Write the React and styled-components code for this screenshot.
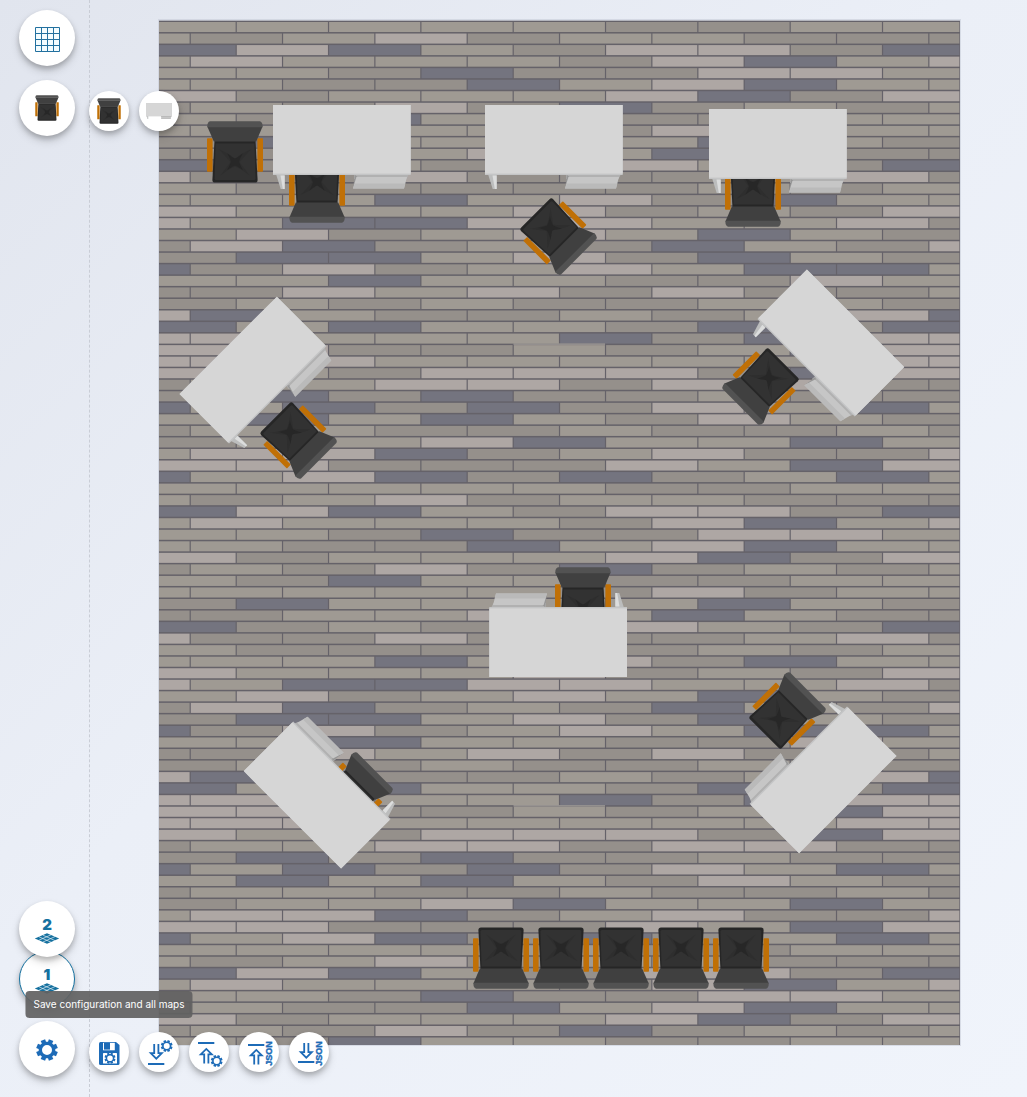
import React from "react";
import styled, { createGlobalStyle, css } from "styled-components";

const BLUE = "#1d6bb7";
const TEAL = "#14709f";

const GlobalStyle = createGlobalStyle`
  * { box-sizing: border-box; }
  body {
    margin: 0;
    font-family: Inter, "Liberation Sans", sans-serif;
    background: #eef2f9;
  }
`;

const Page = styled.div`
  display: grid;
  grid-template-columns: 90px 1fr;
  min-height: 100vh;
  background: linear-gradient(135deg, #e1e5ee 0%, #ebeff7 45%, #f0f4fb 100%);
`;

const Rail = styled.nav`
  position: relative;
  z-index: 2;
  display: flex;
  flex-direction: column;
  justify-content: space-between;
  padding: 10px 0 20px 19px;
  border-right: 1px dashed #c9cdd6;
`;

const RailGroup = styled.div`
  display: flex;
  flex-direction: column;
  gap: 14px;
`;

const ToolRow = styled.div`
  display: flex;
  align-items: flex-end;
  gap: 14px;
`;

const SmallTools = styled.div`
  display: flex;
  gap: 10px;
  padding-bottom: 5px;
`;

const Levels = styled.div`
  display: flex;
  flex-direction: column;
`;

const roundButton = css`
  position: relative;
  display: flex;
  flex: none;
  align-items: center;
  justify-content: center;
  padding: 0;
  border: 0;
  border-radius: 50%;
  background: #fff;
  cursor: pointer;
  box-shadow: 0 3px 5px rgba(0, 0, 0, 0.2), 0 5px 10px rgba(0, 0, 0, 0.14);
`;

const LargeButton = styled.button`
  ${roundButton}
  width: 56px;
  height: 56px;
`;

const SmallButton = styled.button`
  ${roundButton}
  width: 40px;
  height: 40px;
`;

const LevelButton = styled(LargeButton)`
  flex-direction: column;
  gap: 1px;
  padding-top: 2px;
  z-index: ${(p) => (p.$active ? 0 : 1)};
  border: ${(p) => (p.$active ? `1px solid ${TEAL}` : "0")};
  color: ${TEAL};
  font: 900 15px/15px Inter, "Liberation Sans", sans-serif;

  & + & {
    margin-top: -6px;
  }
`;

const Tooltip = styled.span`
  position: absolute;
  bottom: calc(100% + 14px);
  left: 50%;
  transform: translateX(-50%);
  padding: 0 8px;
  border-radius: 4px;
  background: rgba(97, 97, 97, 0.92);
  color: #fff;
  font: 400 10px/27px Inter, "Liberation Sans", sans-serif;
  white-space: nowrap;
`;

const Icon = styled.svg`
  display: block;
  flex: none;
  width: ${(p) => p.$w}px;
  height: ${(p) => p.$h}px;
  overflow: visible;
`;

const Workspace = styled.main`
  padding: 20px 67px 51px 69px;
`;

const FloorMap = styled.div`
  position: relative;
  width: 100%;
  aspect-ratio: 801 / 1025;
  outline: 1px solid rgba(200, 205, 216, 0.6);
`;

const FloorSvg = styled.svg`
  display: block;
  width: 100%;
  height: 100%;
`;

const Piece = styled.svg`
  position: absolute;
  overflow: visible;
  transform: translate(-50%, -50%) rotate(${(p) => p.$turn}deg);
`;

/* ---------- floor ---------- */

const MAP_W = 801;
const MAP_H = 1025;
const PLANK_W = 92.33;
const PLANK_H = 11.54;

const PLANKS = [
  "nnnnnggnn", "ngnlgnnggg", "dldngllgd", "nlnnngldnl", "nngdgglln",
  "nnggdnldnn", "lgnnnldgl", "gnglgdgngn", "ngdnnggnn", "nnnnnglgnn",
  "gdnnnndng", "ggnnlndngg", "dgngglngd", "lgglgggnlg", "ngggggngn",
  "nnndnlgdnn", "lnnnlgngl", "lnddllnnlg", "nlgnlndng", "gldgngdngl",
  "gddnlgdng", "dglgnlnddn", "nndnnggln", "gglnlglggn", "gngnggnng",
  "ldnggngnld", "dndnngdgd", "llnnndgdll", "llggngndl", "lllnnnnnll",
  "lnglllgdl", "gnnllgllgg", "gdgdggngg", "dndgdglndn", "ndndnglng",
  "gnnggnggng", "gnnldnndn", "nlldgnlggl", "llggglndl", "dnldgdgndn",
];

const PLANK_COLORS = { n: "#9f9a93", g: "#95908b", l: "#aea7a4", d: "#74747f" };

function Floor() {
  const planks = [];
  for (let row = 0; row * PLANK_H < MAP_H; row++) {
    const kinds = PLANKS[row % PLANKS.length];
    const firstJoint = row % 2 ? 31.2 : 77.2;
    for (let i = 0; i < kinds.length; i++) {
      const end = Math.min(firstJoint + i * PLANK_W, MAP_W);
      const start = i === 0 ? 0 : firstJoint + (i - 1) * PLANK_W;
      planks.push(
        <rect
          key={`${row}-${i}`}
          x={i === 0 ? 0 : start + 0.6}
          y={row * PLANK_H + 2}
          width={Math.max(0, end - start - (i === 0 ? 0.6 : 1.2))}
          height={PLANK_H - 1.5}
          fill={PLANK_COLORS[kinds[i]]}
        />
      );
    }
  }
  return (
    <FloorSvg viewBox={`0 0 ${MAP_W} ${MAP_H}`} preserveAspectRatio="none" aria-hidden="true">
      <defs>
        <clipPath id="floor-edge">
          <rect width={MAP_W} height={MAP_H} />
        </clipPath>
      </defs>
      <rect y="0.6" width={MAP_W} height={MAP_H - 0.6} fill="#656269" />
      <g clipPath="url(#floor-edge)">{planks}</g>
      <path d="M354.5 324.2H446M354.5 785.8H446" stroke="#a39f9a" strokeWidth="1.2" />
    </FloorSvg>
  );
}

/* ---------- furniture ---------- */

function ChairArt() {
  return (
    <>
      <rect x="0" y="17.3" width="5.6" height="33.5" rx="0.8" fill="#c07006" />
      <rect x="50.4" y="17.3" width="5.6" height="33.5" rx="0.8" fill="#c07006" />
      <path d="M7.5 19.5H48.5L50.6 59Q50.6 61.6 48 61.6H8Q5.4 61.6 5.4 59Z" fill="#262626" />
      <path d="M8.6 22.5H47.4L48.6 57.5Q48.6 59 47 59H9Q7.6 59 7.6 57.5Z" fill="#323232" />
      <path d="M11.5 28Q24 34 28 38Q32 34 44.5 28Q36 37 32.5 41Q37 47 42.5 54.5Q32 46.5 28 45.5Q24 46.5 13.5 54.5Q19 47 23.5 41Q20 37 11.5 28Z" fill="#2e2e2e" />
      <path d="M20 32Q26 37 28 37.5Q30 37 36 32Q32.5 38 32 41Q33.5 45 36 49Q30 45 28 44.8Q26 45 20 49Q22.5 45 24 41Q23.5 38 20 32Z" fill="#272727" />
      <path d="M0.3 5.5L6.8 20.6H49.2L55.6 5.5Z" fill="#404040" />
      <path d="M3 0.3H53Q55.8 1.2 55.6 6.2H0.3Q0 1.2 3 0.3Z" fill="#525252" />
    </>
  );
}

function DeskArt() {
  return (
    <>
      <path d="M2.7 68L7.7 84H11.7V68Z" fill="#bcbdbd" />
      <path d="M7.5 70.5H11.7V84H9.8Z" fill="#dcdddd" />
      <path d="M81.5 68H136.5L133.5 74H81Z" fill="#b1b1b1" />
      <path d="M82 70L80 83.6L84.5 72Z" fill="#969696" />
      <path d="M83.4 72H134L131 83.6H80Z" fill="#c6c6c6" />
      <path d="M81.8 78.5H132.3L131 83.6H80Z" fill="#bababa" />
      <rect width="137.7" height="70" fill="#c4c5c6" />
      <rect width="137.7" height="68.6" fill="#d6d6d6" />
    </>
  );
}

const KINDS = {
  chair: { w: 56, h: 62, Art: ChairArt },
  desk: { w: 138, h: 84, Art: DeskArt },
};

const PIECES = [
  { kind: "chair", x: 76, y: 132, turn: 0 },
  { kind: "chair", x: 158, y: 172, turn: 180 },
  { kind: "desk", x: 183, y: 127, turn: 0 },
  { kind: "desk", x: 395, y: 127, turn: 0 },
  { kind: "chair", x: 398, y: 215, turn: 135 },
  { kind: "chair", x: 594, y: 176, turn: 180 },
  { kind: "desk", x: 619, y: 131, turn: 0 },
  { kind: "desk", x: 99, y: 355, turn: -45 },
  { kind: "chair", x: 138, y: 419, turn: 135 },
  { kind: "desk", x: 667, y: 328, turn: 45 },
  { kind: "chair", x: 603, y: 365, turn: 225 },
  { kind: "chair", x: 424, y: 578, turn: 0 },
  { kind: "desk", x: 399, y: 615, turn: 180 },
  { kind: "desk", x: 659, y: 755, turn: 135 },
  { kind: "chair", x: 627, y: 692, turn: 45 },
  { kind: "chair", x: 194, y: 772, turn: 45 },
  { kind: "desk", x: 163, y: 770, turn: 225 },
  { kind: "chair", x: 342, y: 938, turn: 180 },
  { kind: "chair", x: 402, y: 938, turn: 180 },
  { kind: "chair", x: 462, y: 938, turn: 180 },
  { kind: "chair", x: 522, y: 938, turn: 180 },
  { kind: "chair", x: 582, y: 938, turn: 180 },
];

function Furniture({ kind, x, y, turn }) {
  const { w, h, Art } = KINDS[kind];
  return (
    <Piece
      viewBox={`0 0 ${w} ${h}`}
      $turn={turn}
      style={{
        left: `${(x / MAP_W) * 100}%`,
        top: `${(y / MAP_H) * 100}%`,
        width: `${(w / MAP_W) * 100}%`,
      }}
      aria-hidden="true"
    >
      <Art />
    </Piece>
  );
}

/* ---------- icons ---------- */

function gearPath(cx, cy, r, hole) {
  const teeth = 8;
  const root = r * 0.76;
  const pts = [];
  for (let i = 0; i < teeth; i++) {
    const a = ((i + 0.5) / teeth) * Math.PI * 2;
    [[-0.27, root], [-0.22, r], [0.22, r], [0.27, root]].forEach(([d, rad]) => {
      pts.push(`${(cx + Math.cos(a + d) * rad).toFixed(2)} ${(cy + Math.sin(a + d) * rad).toFixed(2)}`);
    });
  }
  return `M${pts.join("L")}ZM${cx - hole} ${cy}a${hole} ${hole} 0 1 0 ${hole * 2} 0a${hole} ${hole} 0 1 0 ${-hole * 2} 0Z`;
}

const Gear = ({ cx, cy, r, hole, fill = BLUE }) => (
  <path d={gearPath(cx, cy, r, hole)} fill={fill} fillRule="evenodd" />
);

const GridIcon = () => (
  <Icon $w={26} $h={26} viewBox="0 0 26 26" aria-hidden="true">
    <path
      d="M1.5 2.5H25.5V26.5H1.5ZM1.5 8.5H25.5M1.5 14.5H25.5M1.5 20.5H25.5M7.5 2.5V26.5M13.5 2.5V26.5M19.5 2.5V26.5"
      fill="#f3fcff"
      stroke="#22709f"
    />
  </Icon>
);

const LayerIcon = () => (
  <Icon $w={26} $h={11} viewBox="0 0 26 11" aria-hidden="true">
    <path d="M13 0.2L25.2 5.5L13 10.8L0.8 5.5Z" fill={TEAL} />
    <path
      d="M9 2.2L21 7.6M5 3.8L17 9.2M17 1.8L5 7.2M21 3.6L9 9"
      stroke="#fff"
      strokeWidth="0.6"
    />
  </Icon>
);

const ToolIcon = ({ children }) => (
  <Icon $w={40} $h={40} viewBox="0 0 40 40" aria-hidden="true">{children}</Icon>
);

const DownArrow = ({ y }) => (
  <path
    transform={`translate(0 ${y})`}
    d="M15.2 0V9.2H11.8L17.3 14.7L22.8 9.2H19.4V0"
    fill="none"
    stroke={BLUE}
    strokeWidth="1.8"
  />
);

const UpArrow = ({ y }) => (
  <path
    transform={`translate(0 ${y})`}
    d="M15.2 16.4V7.4H11.8L17.3 1.9L22.8 7.4H19.4V16.4"
    fill="none"
    stroke={BLUE}
    strokeWidth="1.8"
  />
);

const Bar = ({ y }) => <rect x="9" y={y} width="16.3" height="2" fill={BLUE} />;

const JsonMark = () => (
  <text
    transform="translate(33.4 33.8) rotate(-90)"
    fill={BLUE}
    stroke={BLUE}
    strokeWidth="0.4"
    fontFamily="Liberation Sans, sans-serif"
    fontWeight="700"
    fontSize="9"
  >
    JSON
  </text>
);

const SaveIcon = () => (
  <ToolIcon>
    <path d="M11.5 10H27L30.5 13V31.5Q30.5 33 29 33H11.5Q10 33 10 31.5V11.5Q10 10 11.5 10Z" fill={BLUE} />
    <path d="M14 10.8H25.8V18.3H14Z" fill="#fff" />
    <rect x="15" y="10.8" width="6" height="6.8" fill={BLUE} />
    <rect x="14" y="21" width="14" height="10.5" rx="0.6" fill="#fff" />
    <Gear cx={21} cy={26.2} r={5.6} hole={2.8} />
  </ToolIcon>
);

const ChairThumb = () => (
  <Icon $w={24} $h={26} viewBox="0 0 56 62" aria-hidden="true"><ChairArt /></Icon>
);

const DeskThumb = () => (
  <Icon $w={26} $h={16} viewBox="0 0 138 84" aria-hidden="true"><DeskArt /></Icon>
);

export default function App() {
  return (
    <>
      <GlobalStyle />
      <Page>
        <Rail>
          <RailGroup>
            <LargeButton aria-label="Grid"><GridIcon /></LargeButton>
            <ToolRow>
              <LargeButton aria-label="Furniture"><ChairThumb /></LargeButton>
              <SmallTools>
                <SmallButton aria-label="Chair"><ChairThumb /></SmallButton>
                <SmallButton aria-label="Desk"><DeskThumb /></SmallButton>
              </SmallTools>
            </ToolRow>
          </RailGroup>
          <RailGroup>
            <Levels>
              <LevelButton>2<LayerIcon /></LevelButton>
              <LevelButton $active>1<LayerIcon /></LevelButton>
            </Levels>
            <ToolRow>
              <LargeButton aria-label="Settings">
                <Icon $w={24} $h={24} viewBox="0 0 24 24" aria-hidden="true">
                  <Gear cx={12} cy={13} r={11} hole={5} />
                </Icon>
              </LargeButton>
              <SmallTools>
                <SmallButton aria-describedby="save-tip" aria-label="Save">
                  <SaveIcon />
                  <Tooltip id="save-tip" role="tooltip">Save configuration and all maps</Tooltip>
                </SmallButton>
                <SmallButton aria-label="Download configuration">
                  <ToolIcon>
                    <DownArrow y={12} />
                    <Bar y={31} />
                    <Gear cx={27.7} cy={14} r={6} hole={3} />
                  </ToolIcon>
                </SmallButton>
                <SmallButton aria-label="Upload configuration">
                  <ToolIcon>
                    <Bar y={10} />
                    <UpArrow y={15} />
                    <Gear cx={27.7} cy={29} r={6} hole={3} />
                  </ToolIcon>
                </SmallButton>
                <SmallButton aria-label="Upload JSON">
                  <ToolIcon>
                    <Bar y={12} />
                    <UpArrow y={16} />
                    <JsonMark />
                  </ToolIcon>
                </SmallButton>
                <SmallButton aria-label="Download JSON">
                  <ToolIcon>
                    <DownArrow y={11} />
                    <Bar y={29} />
                    <JsonMark />
                  </ToolIcon>
                </SmallButton>
              </SmallTools>
            </ToolRow>
          </RailGroup>
        </Rail>
        <Workspace>
          <FloorMap>
            <Floor />
            {PIECES.map((piece, i) => (
              <Furniture key={i} {...piece} />
            ))}
          </FloorMap>
        </Workspace>
      </Page>
    </>
  );
}
